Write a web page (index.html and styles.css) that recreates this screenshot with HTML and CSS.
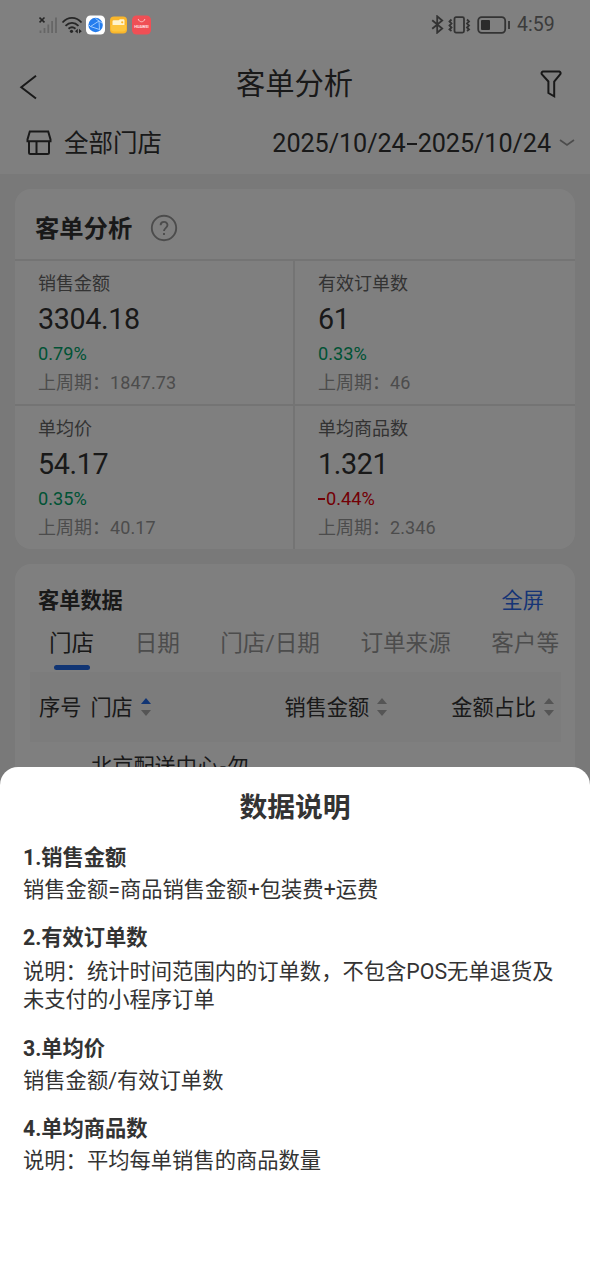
FILE: index.html
```html
<!DOCTYPE html>
<html lang="zh-CN">
<head>
<meta charset="utf-8">
<title>客单分析</title>
<link rel="stylesheet" href="styles.css">
</head>
<body>
<div class="screen">
  <header class="status">
    <div class="status-left">
      <svg class="signal" width="19" height="18" viewBox="0 0 19 18"><path class="dim" d="M1.500 14.500V17M5.500 12v5M9.300 8.500V17M13.100 5V17M17 1.500V17"/><path class="strong" d="M.5 1.500l5 4.800M5.500 1.500l-5 4.800"/></svg>
      <svg class="wifi" width="22" height="18" viewBox="0 0 22 18"><path d="M1.500 6.500C7 .4 15 .4 20.500 6.500M4.500 9.800c3.900-4 9.100-4 13 0M7.500 12.800c2.200-1.900 4.800-1.900 7 0"/><circle cx="10.500" cy="15.300" r="1.600"/><path class="tri" d="M14 15.200l2.800-2.400v4.800zM20.800 15.200L18 12.800v4.800z"/></svg>
      <svg class="app-icon" width="19" height="20" viewBox="0 0 19 20"><rect y=".5" width="19" height="19" rx="4.500" fill="#fff"/><circle cx="9.600" cy="10" r="7.200" fill="#247dee"/><path d="M4.500 11.500L13 6l.5 8.500-9-3M13 6L9.500 3.500M13 6l3 2M4.500 11.500L3 10M13.500 14.500l1 1" fill="none" stroke="#a9d2ff" stroke-width=".9"/></svg>
      <svg class="app-icon" width="17" height="18" viewBox="0 0 17 18"><rect y=".5" width="17" height="17" rx="4" fill="#f9b62b"/><path d="M2.500 5.500q0-1.200 1.200-1.200h5l1.200-1h3.500q1.100 0 1.100 1.100V10h-12z" fill="#fff4cd"/><circle cx="12.200" cy="6.300" r="1.100" fill="#f9b62b"/><path d="M1 9h15v3.500q0 3-3 3H4q-3 0-3-3z" fill="#fdc53e"/></svg>
      <svg class="app-icon" width="19" height="20" viewBox="0 0 19 20"><rect y=".5" width="19" height="19" rx="4.500" fill="#f04f55"/><path d="M6.200 4c1 3.700 5.700 3.700 6.700 0" fill="none" stroke="#ffc5c7" stroke-width="1"/><text x="9.500" y="13" class="tiny">HUAWEI</text></svg>
    </div>
    <div class="status-right">
      <svg width="13" height="19" viewBox="0 0 13 19"><path d="M1.200 5.200l10 8.300-5 4.200V1.300l5 4.200-10 8.300"/></svg>
      <svg class="vibrate" width="23" height="18" viewBox="0 0 23 18"><rect x="6.500" y="1.200" width="9.500" height="15.400" rx="1.500"/><path d="M3.500 3.500L1.500 5.500l2 2-2 2 2 2-2 2 2 1.500M19 3.500l2 2-2 2 2 2-2 2 2 2-2 1.500"/></svg>
      <svg class="battery" width="34" height="18" viewBox="0 0 34 18"><rect x="1.200" y="1.200" width="27" height="15.600" rx="3.500"/><rect class="level" x="4" y="4" width="9" height="10" rx="1"/><path d="M32 5v8"/></svg>
      <span class="clock">4:59</span>
    </div>
  </header>

  <nav class="titlebar">
    <svg width="20" height="26" viewBox="0 0 20 26"><path d="M17 1.800L2.300 13.300 17 24.500"/></svg>
    <h1>客单分析</h1>
    <svg class="funnel" width="23" height="28" viewBox="0 0 23 28"><path d="M3 1.500h16.200q2.300 1 .9 3l-5.900 7v14.800L8.400 23V11.500L2 4.500q-1.300-2 1-3z"/></svg>
  </nav>

  <div class="filters">
    <svg class="shop" width="26" height="26" viewBox="0 0 26 26"><path d="M3.800 1.500h18.400l2.300 8v1.800h-23V9.500zM3 11.500v11q0 1.500 1.500 1.500h17q1.500 0 1.500-1.500v-11M10.500 11.500V24"/></svg>
    <span class="store">全部门店</span>
    <span class="dates">2025/10/24<i></i>2025/10/24</span>
    <svg class="chevron" width="16" height="8" viewBox="0 0 16 8"><path d="M1 1l7 5 7-5"/></svg>
  </div>

  <main class="content">
    <section class="card summary">
      <div class="card-head">
        <h2>客单分析</h2>
        <svg width="28" height="28" viewBox="0 0 28 28"><circle cx="14" cy="14" r="12.200"/><path d="M10.600 11.300c0-4.500 6.900-4.500 6.900-.2 0 2.700-3.500 2.900-3.500 6M14 19v2"/></svg>
      </div>
      <div class="metrics">
        <div class="metric"><p class="label">销售金额</p><p class="value">3304.18</p><p class="rate">0.79%</p><p class="previous">上周期：<span>1847.73</span></p></div>
        <div class="metric"><p class="label">有效订单数</p><p class="value">61</p><p class="rate">0.33%</p><p class="previous">上周期：<span>46</span></p></div>
        <div class="metric"><p class="label">单均价</p><p class="value">54.17</p><p class="rate">0.35%</p><p class="previous">上周期：<span>40.17</span></p></div>
        <div class="metric"><p class="label">单均商品数</p><p class="value">1.321</p><p class="rate down"><i></i>0.44%</p><p class="previous">上周期：<span>2.346</span></p></div>
      </div>
    </section>

    <section class="card data">
      <div class="data-head"><h3>客单数据</h3><a>全屏</a></div>
      <div class="tabs"><span class="active">门店</span><span>日期</span><span>门店/日期</span><span>订单来源</span><span>客户等</span></div>
      <div class="table-head">
        <span>序号</span>
        <span class="col-store">门店<svg class="sort asc" width="10" height="18" viewBox="0 0 10 18"><path d="M5 0l5 6H0z"/><path d="M0 12h10l-5 6z"/></svg></span>
        <span class="col-amount">销售金额<svg class="sort" width="10" height="18" viewBox="0 0 10 18"><path d="M5 0l5 6H0z"/><path d="M0 12h10l-5 6z"/></svg></span>
        <span class="col-share">金额占比<svg class="sort" width="10" height="18" viewBox="0 0 10 18"><path d="M5 0l5 6H0z"/><path d="M0 12h10l-5 6z"/></svg></span>
      </div>
      <div class="table-row">北京配送中心<span class="dash">-</span>勿</div>
    </section>
  </main>

  <div class="mask"></div>
  <section class="sheet">
    <h2>数据说明</h2>
    <article><h4>1.销售金额</h4><p>销售金额=商品销售金额+包装费+运费</p></article>
    <article class="long"><h4>2.有效订单数</h4><p>说明：统计时间范围内的订单数，不包含POS无单退货及未支付的小程序订单</p></article>
    <article><h4>3.单均价</h4><p>销售金额/有效订单数</p></article>
    <article><h4>4.单均商品数</h4><p>说明：平均每单销售的商品数量</p></article>
  </section>
</div>
</body>
</html>
```

FILE: styles.css
```css
* { box-sizing: border-box; margin: 0; padding: 0; }
body { font-family: Roboto, "Noto Sans CJK SC", sans-serif; color: #333; background: #fff; }
svg { display: block; flex: none; fill: none; stroke: #333; stroke-width: 2; }
.screen { position: relative; width: 590px; height: 1278px; overflow: hidden; background: #f2f2f2; }

.status { position: relative; z-index: 2; height: 50px; padding: 0 36px 1px 39px; display: flex; justify-content: space-between; align-items: center; }
.status::before { content: ""; position: absolute; z-index: -1; inset: 0; background: #808080; }
.status-left, .status-right { display: flex; align-items: center; }
.signal { margin-right: 3px; }
.signal .dim { stroke: #666; stroke-width: 1.8; }
.signal .strong { stroke: #262626; stroke-width: 1.6; }
.wifi { margin-right: 3px; stroke: #262626; stroke-width: 1.8; }
.wifi circle, .wifi .tri { fill: #262626; stroke: none; }
.app-icon { stroke: none; margin-right: 5px; }
.tiny { font: 700 3.900px Roboto, sans-serif; fill: #ffe1e2; text-anchor: middle; stroke: none; }
.status-right svg { stroke: #333; stroke-width: 1.8; }
.status-right .vibrate { margin-left: 4px; }
.status-right .battery { margin-left: 6px; }
.status-right .battery .level { fill: #2b2b2b; stroke: none; }
.clock { margin-left: 6px; font-size: 19.500px; line-height: 24px; color: #3b3b3b; width: 37px; white-space: nowrap; }

.titlebar { height: 68px; padding: 0 27px 0 19px; display: flex; align-items: center; justify-content: space-between; background: #fff; }
.titlebar > svg:first-child { margin-top: 6px; }
.titlebar h1 { font-size: 29.300px; font-weight: 400; line-height: 36px; margin: 0 0 1px 10px; }
.titlebar .funnel { margin-top: -1px; }
.filters { height: 56px; padding: 0 15px 6px 26px; display: flex; align-items: center; background: #fff; }
.store { font-size: 24.500px; line-height: 32px; margin: 2px 0 0 12px; }
.dates { margin-left: auto; display: flex; align-items: center; font-size: 25.200px; line-height: 32px; letter-spacing: -.07px; padding-top: 1px; }
.dates i { width: 10px; height: 2px; margin: 0 1px; background: #333; }
.chevron { margin-left: 8px; stroke: #999; stroke-width: 1.8; }

.content { padding: 15px 15px 0; display: flex; flex-direction: column; gap: 15px; }
.card { background: #fff; border-radius: 16px; }
.summary { height: 360px; overflow: hidden; }
.card-head { height: 70px; padding: 8px 20px 0; display: flex; align-items: center; gap: 18px; }
.card-head h2 { font-size: 24.300px; line-height: 32px; font-weight: 700; padding-top: 2px; }
.card-head svg { stroke: #999; stroke-width: 1.900; }
.metrics { display: grid; grid-template-columns: 280px 280px; grid-template-rows: 145px 145px; }
.metric { border-top: 2px solid #e8e8e8; padding: 10px 0 0 23px; }
.metric:nth-child(odd) { border-right: 2px solid #e8e8e8; }
.label { font-size: 18px; line-height: 26px; color: #666; }
.value { font-size: 28.700px; line-height: 44px; letter-spacing: -.35px; }
.rate { display: flex; align-items: center; font-size: 18.200px; line-height: 26px; color: #00a66b; }
.rate.down { color: #e6000b; }
.rate i { width: 7px; height: 1.5px; margin-right: 1px; background: currentColor; }
.previous { display: flex; font-size: 18px; line-height: 32px; color: #999; }
.previous span { letter-spacing: .12px; }

.data { height: 300px; padding: 21px 14px 0 15px; }
.data-head { display: flex; justify-content: space-between; padding: 0 17px 0 8px; font-size: 21.200px; line-height: 32px; }
.data-head h3 { font-size: 21.200px; font-weight: 700; }
.data-head a { color: #2c68ed; }
.tabs { display: flex; justify-content: space-between; height: 55px; padding: 10px 2px 0 19px; font-size: 22.600px; line-height: 34px; color: #999; white-space: nowrap; }
.tabs .active { color: #333; display: flex; flex-direction: column; align-items: center; }
.tabs .active::after { content: ""; width: 36px; height: 5px; margin-top: 4px; border-radius: 3px; background: #236be8; }
.table-head { height: 70px; padding: 2px 7px 0 9px; display: flex; align-items: center; font-size: 21.200px; line-height: 32px; background: #f8f8f8; }
.table-head span { display: flex; align-items: center; white-space: nowrap; }
.col-store { margin-left: 9px; }
.col-amount { margin-left: auto; }
.col-share { margin-left: 64px; }
.sort { fill: #aaa; stroke: none; margin: -2px 0 0 8px; }
.sort.asc path:first-child { fill: #236be8; }
.table-row { padding: 9px 61px; font-size: 21.200px; line-height: 32px; }
.table-row .dash { padding: 0 1.8px; }

.mask { position: absolute; inset: 0; z-index: 1; background: rgba(0, 0, 0, .5); }
.sheet { position: absolute; z-index: 3; left: 0; right: 0; bottom: 0; height: 511px; padding: 23px 23px 0; border-radius: 18px 18px 0 0; background: #fff; }
.sheet h2 { text-align: center; font-size: 27.800px; line-height: 36px; margin-bottom: 18px; }
.sheet article { margin-bottom: 20px; font-size: 21.300px; line-height: 28px; }
.sheet h4 { font-size: 21.250px; line-height: 28px; margin-bottom: 4px; }
.sheet .long { margin-bottom: 21px; }
.sheet .long h4 { margin-bottom: 6px; }
```
